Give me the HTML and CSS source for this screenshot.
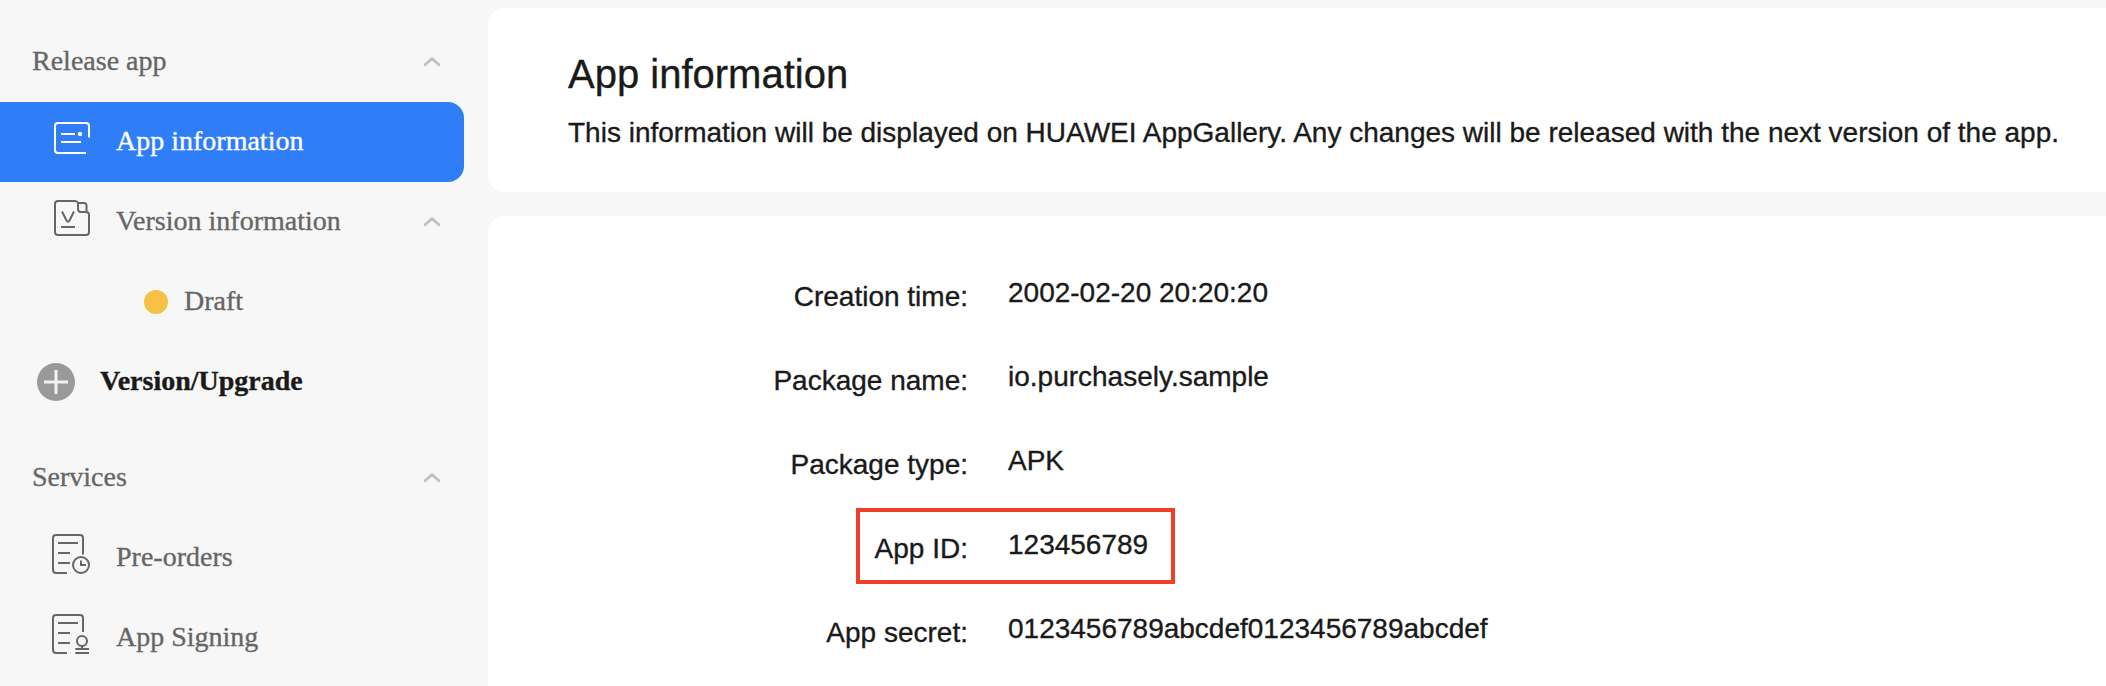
FILE: index.html
```html
<!DOCTYPE html>
<html lang="en">
<head>
<meta charset="utf-8">
<title>App information</title>
<link rel="stylesheet" href="styles.css">
</head>
<body>
<div class="layout">
  <nav class="sidebar">
    <div class="row group">
      <span class="label">Release app</span>
      <svg class="chevron" viewBox="0 0 16 10"><path d="M0 8.6 8 1.6l8 7"/></svg>
    </div>
    <div class="row item active">
      <svg class="icon" viewBox="0 0 40 40"><path d="M37 19.500V8a3 3 0 0 0-3-3H6a3 3 0 0 0-3 3v24a3 3 0 0 0 3 3h28M9 16h14M9 24h20"/><circle class="dot" cx="28" cy="16" r="2.200"/></svg>
      <span class="label">App information</span>
    </div>
    <div class="row item">
      <svg class="icon" viewBox="0 0 40 40"><path d="M26 5q-1-2-3-2H6a3 3 0 0 0-3 3v28a3 3 0 0 0 3 3h28a3 3 0 0 0 3-3V17q0-3-3-3"/><path d="M26 5h6a2.500 2.500 0 0 1 2.500 2.500V14H29a3 3 0 0 1-3-3ZM10 13.500l4.500 9q1.500 2.500 3 0L22 13.500M9 29h14"/></svg>
      <span class="label">Version information</span>
      <svg class="chevron" viewBox="0 0 16 10"><path d="M0 8.600 8 1.600l8 7"/></svg>
    </div>
    <div class="row draft">
      <span class="status"></span>
      <span class="label">Draft</span>
    </div>
    <div class="row upgrade">
      <svg class="plus" viewBox="0 0 38 38"><circle cx="19" cy="19" r="19"/><path d="M7 19h24M19 7v24"/></svg>
      <span class="label">Version/Upgrade</span>
    </div>
    <div class="row group services">
      <span class="label">Services</span>
      <svg class="chevron" viewBox="0 0 16 10"><path d="M0 8.600 8 1.600l8 7"/></svg>
    </div>
    <div class="row item">
      <svg class="icon" viewBox="0 0 40 40"><path d="M31 20.500V4a3 3 0 0 0-3-3H4a3 3 0 0 0-3 3v32a3 3 0 0 0 3 3h11M6 9h20M6 19h12M6 29h12M29 26.500V31h5"/><circle cx="29" cy="31" r="8"/></svg>
      <span class="label">Pre-orders</span>
    </div>
    <div class="row item">
      <svg class="icon" viewBox="0 0 40 40"><path d="M31 18V4a3 3 0 0 0-3-3H4a3 3 0 0 0-3 3v32a3 3 0 0 0 3 3h11M6 9h20M6 19h12M6 29h12M30 32v3M23.300 35H37M23.300 39H37"/><circle cx="30" cy="27" r="5"/></svg>
      <span class="label">App Signing</span>
    </div>
  </nav>
  <main class="main">
    <section class="card intro">
      <h1>App information</h1>
      <p>This information will be displayed on HUAWEI AppGallery. Any changes will be released with the next version of the app.</p>
    </section>
    <section class="card details">
      <div class="field"><span class="name">Creation time:</span><span class="value">2002-02-20 20:20:20</span></div>
      <div class="field"><span class="name">Package name:</span><span class="value">io.purchasely.sample</span></div>
      <div class="field"><span class="name">Package type:</span><span class="value">APK</span></div>
      <div class="field"><span class="name">App ID:</span><span class="value">123456789</span><span class="highlight"></span></div>
      <div class="field"><span class="name">App secret:</span><span class="value">0123456789abcdef0123456789abcdef</span></div>
    </section>
  </main>
</div>
</body>
</html>
```
FILE: styles.css
```css
* { box-sizing: border-box; }
body {
  margin: 0;
  background: #f7f7f7;
  color: #1a1a1a;
  font: 28px "Liberation Sans", Arial, sans-serif;
  -webkit-text-stroke: 0.35px currentColor;
}
.layout {
  display: grid;
  grid-template-columns: 488px 1fr;
  height: 686px;
  overflow: hidden;
}

/* Sidebar */
.sidebar {
  padding-top: 22px;
  color: #666;
  font-family: "Liberation Serif", "Times New Roman", serif;
}
.row {
  display: flex;
  align-items: center;
  width: 464px;
  height: 80px;
}
.row .label { padding-bottom: 2px; white-space: nowrap; }
.group { padding-left: 32px; }
.item { padding-left: 52px; }
.item .label { margin-left: 24px; }
.active {
  background: #2f7ef7;
  color: #fff;
  border-radius: 0 16px 16px 0;
}
.icon {
  width: 40px;
  height: 40px;
  margin-bottom: 8px;
  flex: none;
  fill: none;
  stroke: currentColor;
  stroke-width: 2;
  overflow: visible;
}
.icon .dot { fill: currentColor; stroke: none; }
.chevron {
  width: 16px;
  height: 10px;
  margin: 0 24px 0 auto;
  fill: none;
  stroke: #c2c2c2;
  stroke-width: 2.8;
}
.draft { padding-left: 144px; gap: 16px; }
.status {
  width: 24px;
  height: 24px;
  border-radius: 50%;
  background: #f6c144;
}
.upgrade { padding-left: 37px; gap: 25px; color: #1a1a1a; font-weight: bold; }
.plus { width: 38px; height: 38px; fill: #999; }
.plus path { stroke: #f2f2f2; stroke-width: 3; }
.services { margin-top: 16px; }

/* Content */
.main {
  display: flex;
  flex-direction: column;
  gap: 24px;
  padding-top: 8px;
  min-width: 0;
}
.card { background: #fff; border-radius: 16px 0 0 16px; }
.intro { padding: 38px 0 39px 80px; }
.intro h1 { margin: 0 0 11px; font-size: 40px; font-weight: 400; line-height: 56px; }
.intro p { margin: 0; line-height: 40px; white-space: nowrap; }
.details { flex: 1; padding-top: 38px; border-bottom-left-radius: 0; }
.field {
  position: relative;
  display: grid;
  grid-template-columns: 480px 1fr;
  column-gap: 40px;
  align-items: center;
  height: 84px;
}
.name { padding-top: 2px; text-align: right; }
.value { padding-bottom: 6px; }
.highlight {
  position: absolute;
  left: 368px;
  top: 2px;
  width: 319px;
  height: 76px;
  border: 4px solid #ed4027;
}
```
